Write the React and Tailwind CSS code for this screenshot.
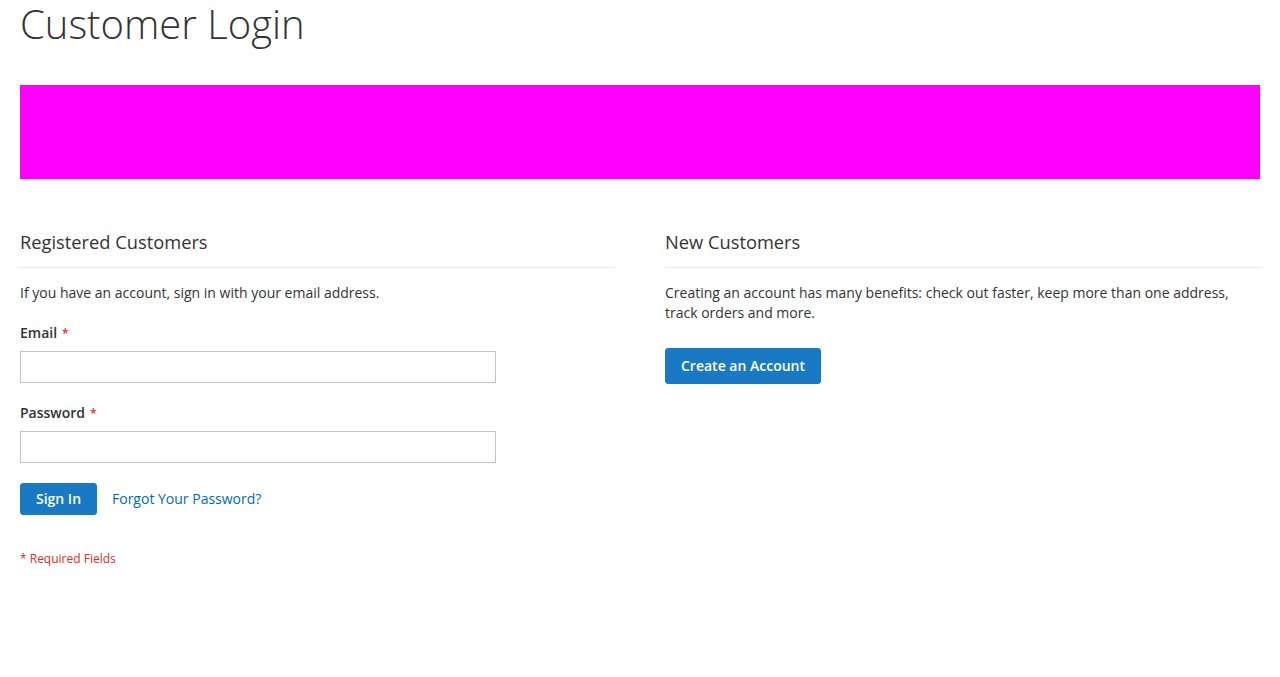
import React from 'react';

const Field = ({ label, type }) => (
  <div className="mb-[19px]">
    <label className="block pt-px text-sm leading-5 font-semibold text-[#333] mb-[8px]">
      {label}
      <span className="text-[#e02b27] ml-[5px] text-xs">*</span>
    </label>
    <input
      type={type}
      className="block w-[476px] h-8 border border-[#c2c2c2] bg-white px-[9px] text-sm outline-none"
    />
  </div>
);

export default function App() {
  return (
    <div className="min-h-screen bg-white text-[#333] px-5" style={{ fontFamily: '"Open Sans", "Liberation Sans", sans-serif' }}>
      <h1 className="text-[40px] leading-[44px] font-light pt-[2px]">Customer Login</h1>

      <div className="mt-[39px] h-[94px] bg-[#ff00ff]" />

      <div className="grid grid-cols-2 gap-[50px] mt-[52px]">
        <div>
          <div className="border-b border-[#e8e8e8] pb-[14px] mb-[15px]">
            <strong className="block text-[18.3px] leading-[22px] font-normal">Registered Customers</strong>
          </div>
          <p className="text-sm leading-5 mb-[19px]">If you have an account, sign in with your email address.</p>
          <form onSubmit={(e) => e.preventDefault()}>
            <Field label="Email" type="email" />
            <Field label="Password" type="password" />
            <div className="flex items-center gap-[15px] mt-[20px]">
              <button className="w-[77px] h-8 rounded-[3px] bg-[#1979c3] border border-[#1979c3] text-white text-sm font-semibold">
                Sign In
              </button>
              <a href="#" className="text-sm text-[#006bb4]">Forgot Your Password?</a>
            </div>
            <p className="mt-[36px] text-xs leading-4 text-[#e02b27]">* Required Fields</p>
          </form>
        </div>

        <div>
          <div className="border-b border-[#e8e8e8] pb-[14px] mb-[15px]">
            <strong className="block text-[18.3px] leading-[22px] font-normal">New Customers</strong>
          </div>
          <p className="text-sm leading-5 mb-[25px] pr-[20px]">
            Creating an account has many benefits: check out faster, keep more than one address, track orders and more.
          </p>
          <button className="w-[156px] h-9 rounded-[3px] bg-[#1979c3] border border-[#1979c3] text-white text-sm font-semibold">
            Create an Account
          </button>
        </div>
      </div>
    </div>
  );
}
